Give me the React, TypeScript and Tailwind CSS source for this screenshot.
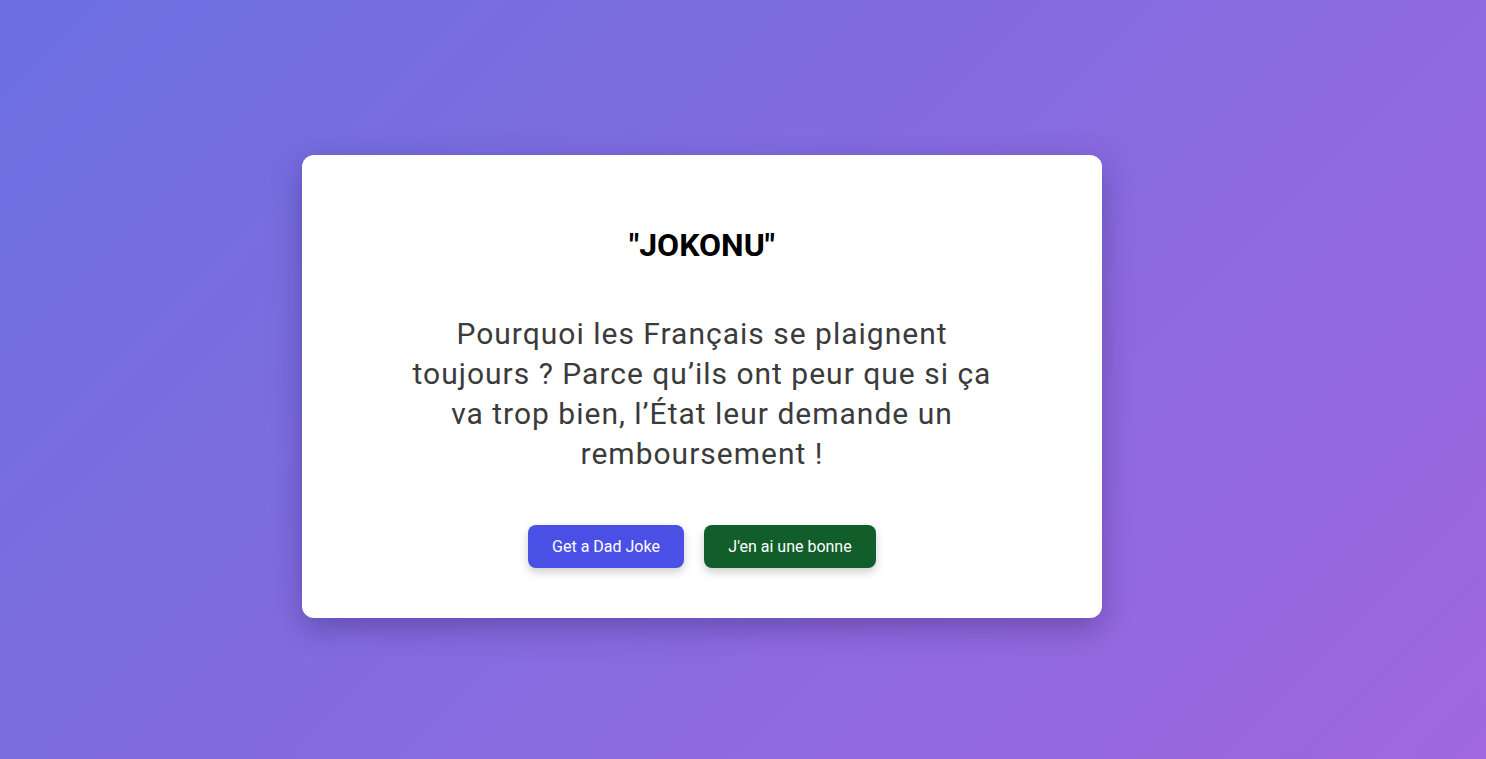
export default function App() {
  return (
    <div className="min-h-screen w-full flex items-start justify-center pr-[82px] bg-[linear-gradient(135deg,#6b6fe0_0%,#a067df_100%)] font-['Roboto',sans-serif]">
      <div className="mt-[155px] w-[800px] bg-white rounded-[12px] shadow-[0_10px_30px_rgba(40,20,90,0.35)] flex flex-col items-center pt-[71px] pb-[50px]">
        <h1 className="text-[32px] leading-[38px] font-bold text-black">"JOKONU"</h1>
        <p className="mt-[50px] w-[592px] text-center text-[30px] leading-[40px] tracking-[1px] text-[#3b3b3b]">
          Pourquoi les Français se plaignent toujours ? Parce qu’ils ont peur que si ça va trop bien, l’État leur demande un remboursement !
        </p>
        <div className="mt-[51px] flex gap-5">
          <button className="h-[43px] w-[156px] rounded-[8px] bg-[#4a4fe5] text-white text-[16px] shadow-[0_4px_10px_rgba(0,0,0,0.2)]">
            Get a Dad Joke
          </button>
          <button className="h-[43px] w-[172px] rounded-[8px] bg-[#115e2b] text-white text-[16px] shadow-[0_4px_10px_rgba(0,0,0,0.2)]">
            J'en ai une bonne
          </button>
        </div>
      </div>
    </div>
  );
}
